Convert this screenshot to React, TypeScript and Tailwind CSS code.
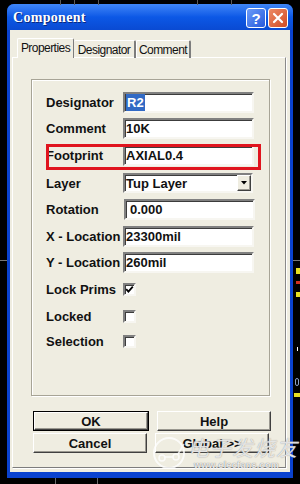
import React from 'react';

const sunken =
  'border-2 border-t-[#808080] border-l-[#808080] border-b-[#f7f6f1] border-r-[#f7f6f1] shadow-[inset_1px_1px_0_#3c3c3c]';
const raised =
  'border border-t-white border-l-white border-b-[#404040] border-r-[#404040] shadow-[inset_-1px_-1px_0_#9a9890]';

function Label({ children }: { children: React.ReactNode }) {
  return <div className="w-[77px] shrink-0 whitespace-nowrap text-[13px] font-bold leading-none text-[#111]">{children}</div>;
}

function Field({ children, pad = 'pl-[1px]' }: { children: React.ReactNode; pad?: string }) {
  return (
    <div className={`flex h-[21px] w-[131px] items-center bg-white ${sunken} ${pad} text-[13px] font-bold leading-none text-[#111]`}>
      {children}
    </div>
  );
}

function Check({ checked }: { checked?: boolean }) {
  return (
    <div className={`flex h-[13px] w-[13px] items-center justify-center bg-white ${sunken}`}>
      {checked && (
        <svg width="9" height="9" viewBox="0 0 9 9">
          <path d="M1.2 4.2 L3.4 6.6 L7.8 1.6" fill="none" stroke="#000" strokeWidth="1.8" />
        </svg>
      )}
    </div>
  );
}

function Button({ children, isDefault }: { children: React.ReactNode; isDefault?: boolean }) {
  return (
    <div className={isDefault ? 'border border-black' : ''}>
      <div
        className={`flex w-[114px] items-center justify-center bg-[#efede1] ${raised} text-[13px] font-bold leading-none text-[#111] ${
          isDefault ? 'h-[18px] w-[112px]' : 'h-[20px]'
        }`}
      >
        {children}
      </div>
    </div>
  );
}

function Backdrop() {
  return (
    <>
      <div className="absolute left-[60px] top-0 h-[5px] w-px bg-[#5a5a5a]" />
      <div className="absolute left-[74px] top-0 h-[5px] w-px bg-[#5a5a5a]" />
      <div className="absolute left-[98px] top-0 h-[5px] w-px bg-[#5a5a5a]" />
      <div className="absolute left-[197px] top-0 h-[5px] w-px bg-[#5a5a5a]" />
      <div className="absolute left-[231px] top-0 h-[5px] w-px bg-[#5a5a5a]" />
      <div className="absolute left-[55px] top-[478px] h-[6px] w-px bg-[#6a6a6a]" />
      <div className="absolute left-[97px] top-[478px] h-[6px] w-px bg-[#6a6a6a]" />
      <div className="absolute left-0 top-[260px] h-px w-[7px] bg-[#777]" />
      <div className="absolute right-0 top-[260px] h-px w-[7px] bg-[#777]" />
      <div className="absolute right-0 top-[268px] h-[6px] w-[4px] bg-[#e8e020]" />
      <div className="absolute right-0 top-[281px] h-[3px] w-[4px] bg-[#d03020]" />
      <div className="absolute right-0 top-[292px] h-[5px] w-[4px] bg-[#e8e020]" />
      <div className="absolute right-[2px] top-[347px] h-[4px] w-px bg-white" />
      <div className="absolute right-0 top-[393px] h-[4px] w-[6px] bg-[#e8e020]" />
      <div className="absolute right-[1px] top-[378px] h-[8px] w-[4px] rounded-full border border-[#8aa0c8]" />
    </>
  );
}

function TitleBar() {
  return (
    <div className="flex h-[26px] items-center rounded-t-[7px] bg-gradient-to-b from-[#3f86f7] via-[#0c58e6] to-[#0a4ad2] pl-[6px] pr-[5px]">
      <span className="font-['Liberation_Serif',serif] text-[14px] font-bold tracking-[0.3px] text-white [text-shadow:1px_1px_0_#0a2a80]">
        Component
      </span>
      <div className="ml-auto flex gap-[2px] pt-[2px]">
        <div className="flex h-[20px] w-[20px] items-center justify-center rounded-[3px] border border-white bg-gradient-to-br from-[#6c9bf8] to-[#2758dc] text-[15px] font-bold leading-none text-white">
          ?
        </div>
        <div className="flex h-[20px] w-[20px] items-center justify-center rounded-[3px] border border-white bg-gradient-to-br from-[#ec8a66] to-[#d24a22]">
          <svg width="12" height="12" viewBox="0 0 12 12">
            <path d="M2 2 L10 10 M10 2 L2 10" stroke="#fff" strokeWidth="2.2" strokeLinecap="round" />
          </svg>
        </div>
      </div>
    </div>
  );
}

function Watermark() {
  return (
    <div className="pointer-events-none absolute left-[152px] top-[436px] flex items-start">
      <svg width="36" height="34" viewBox="0 0 36 34" className="opacity-80">
        <circle cx="17" cy="17" r="15" fill="none" stroke="#fff" strokeWidth="2" />
        <circle cx="10" cy="22" r="3" fill="none" stroke="#fff" strokeWidth="1.6" />
        <circle cx="24" cy="21" r="3" fill="none" stroke="#fff" strokeWidth="1.6" />
        <path d="M13 21 L21 21 M26 18 L32 8" stroke="#fff" strokeWidth="1.6" fill="none" />
      </svg>
      <div className="flex flex-col">
        <span className="-mt-[1px] font-['Noto_Sans_CJK_SC',sans-serif] text-[21px] italic leading-[24px] tracking-[1px] text-white/75 [text-shadow:0_0_1px_#888]">
          电子发烧友
        </span>
        <span className="ml-[6px] mt-[2px] text-[9px] font-bold leading-none tracking-[0.3px] text-white/85 [text-shadow:0_0_1px_#555]">
          www.elecfans.com
        </span>
      </div>
    </div>
  );
}

export default function App() {
  return (
    <div className="relative h-[484px] w-[300px] overflow-hidden bg-black font-['Liberation_Sans',Arial,sans-serif]">
      <Backdrop />
      <div className="pl-[7px] pt-[4px]">
        <div className="flex h-[474px] w-[286px] flex-col rounded-t-[7px] bg-[#0a42cf]">
          <TitleBar />
          <div className="flex flex-1 flex-col px-[3px] pb-[6px]">
            <div className="flex flex-1 flex-col bg-[#efede1] pb-[4px] pl-[2px] pr-[4px] pt-[8px]">
              {/* tabs */}
              <div className="relative z-10 -mb-px flex h-[20px] items-end pl-[5px] text-[12px] leading-none tracking-[-0.55px] text-[#111]">
                <div className="flex h-[20px] w-[57px] items-center justify-center rounded-t-[2px] border-l border-r border-t border-l-white border-r-[#7d7d7d] border-t-white bg-[#efede1] pb-[1px]">
                  Properties
                </div>
                <div className="flex h-[18px] w-[62px] items-center justify-center rounded-t-[2px] border-r-2 border-t border-r-[#7d7d7d] border-t-white">
                  Designator
                </div>
                <div className="flex h-[18px] w-[55px] items-center justify-center rounded-t-[2px] border-l border-r-2 border-t border-l-white border-r-[#7d7d7d] border-t-white">
                  Comment
                </div>
              </div>
              {/* page */}
              <div className="flex flex-1 flex-col border border-b-[#7d7d7d] border-l-white border-r-[#8a8a8a] border-t-white pl-[18px] pt-[21px] shadow-[1px_1px_0_#fff]">
                <div className="relative flex h-[317px] w-[239px] flex-col border border-[#a7a496] pl-[14px] pt-[12px] shadow-[inset_1px_1px_0_#fff,1px_1px_0_#fff]">
                  <div className="flex items-center">
                    <Label>Designator</Label>
                    <Field>
                      <span className="bg-[#316ac5] px-px py-[2px] text-white">R2</span>
                    </Field>
                  </div>
                  <div className="mt-[5px] flex items-center">
                    <Label>Comment</Label>
                    <Field>10K</Field>
                  </div>
                  <div className="mt-[6px] flex items-center">
                    <Label>Footprint</Label>
                    <Field pad="pl-[1px]">AXIAL0.4</Field>
                  </div>
                  <div className="mt-[7px] flex items-center">
                    <Label>Layer</Label>
                    <div className={`flex h-[20px] w-[130px] items-center bg-white ${sunken} pl-[1px] text-[13px] font-bold leading-none text-[#111]`}>
                      <span>Tup Layer</span>
                      <div className={`ml-auto flex h-[16px] w-[14px] items-center justify-center bg-[#efede1] ${raised}`}>
                        <svg width="6" height="4" viewBox="0 0 6 4">
                          <path d="M0 0 H6 L3 3.5 Z" fill="#000" />
                        </svg>
                      </div>
                    </div>
                  </div>
                  <div className="mt-[6px] flex items-center">
                    <Label>Rotation</Label>
                    <div className="ml-px">
                      <Field pad="pl-[4px]">0.000</Field>
                    </div>
                  </div>
                  <div className="mt-[6px] flex items-center">
                    <Label>X - Location</Label>
                    <Field>23300mil</Field>
                  </div>
                  <div className="mt-[5px] flex items-center">
                    <Label>Y - Location</Label>
                    <Field>260mil</Field>
                  </div>
                  <div className="mt-[10px] flex items-center">
                    <Label>Lock Prims</Label>
                    <Check checked />
                  </div>
                  <div className="mt-[14px] flex items-center">
                    <Label>Locked</Label>
                    <Check />
                  </div>
                  <div className="mt-[12px] flex items-center">
                    <Label>Selection</Label>
                    <Check />
                  </div>
                  {/* red annotation box */}
                  <div className="absolute left-[14px] top-[64px] h-[26px] w-[215px] border-[3px] border-[#e0141e]" />
                </div>
                <div className="ml-[2px] mt-[15px] flex gap-[8px]">
                  <Button isDefault>OK</Button>
                  <Button>Help</Button>
                </div>
                <div className="ml-[2px] mt-[2px] flex gap-[8px]">
                  <Button>Cancel</Button>
                  <Button>Global &gt;&gt;</Button>
                </div>
              </div>
            </div>
          </div>
        </div>
      </div>
      <Watermark />
    </div>
  );
}
